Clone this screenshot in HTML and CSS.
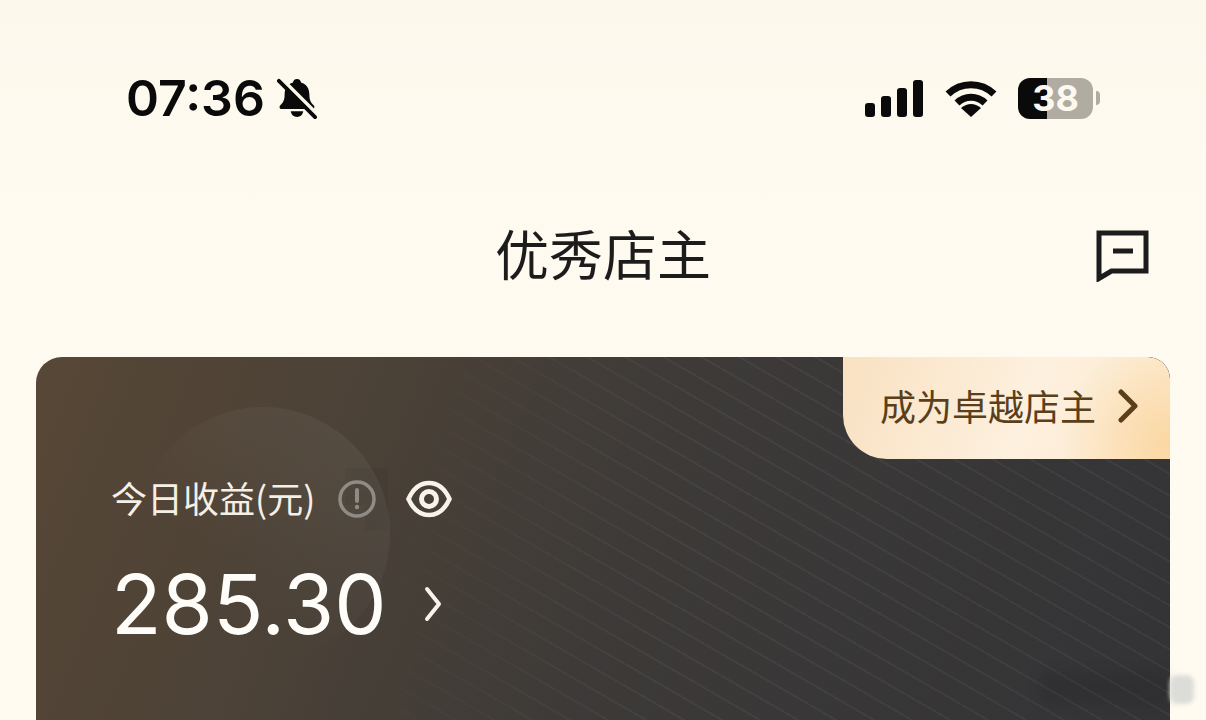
FILE: index.html
```html
<!DOCTYPE html>
<html lang="zh-CN">

<head>
    <meta charset="UTF-8">
    <meta name="viewport" content="width=device-width, initial-scale=1.0">
    <title>优秀店主</title>
    <link rel="stylesheet" href="styles.css">
</head>

<body>
    <div class="status-bar">
        <div class="status-left">
            <span class="clock">07:36</span>
            <svg class="bell-icon" viewBox="0 0 42 42">
                <path d="M21 1c2.600 0 4 1.700 4.200 3.800 6 1.600 8.800 6.600 8.800 12.700 0 5.500 1.600 8.300 4.500 11 1.300 1.300 1.100 4-1.500 4H5c-2.600 0-2.800-2.700-1.500-4 2.900-2.700 4.500-5.500 4.500-11 0-6.100 2.800-11.100 8.800-12.700C17 2.700 18.400 1 21 1z" fill="#0a0a0a"/>
                <path d="M14.500 35h13c-.4 3.600-3 6-6.500 6s-6.100-2.400-6.500-6z" fill="#0a0a0a"/>
                <path d="M4 0l38 38" stroke="#fdf8ec" stroke-width="4"/>
                <path d="M2 3l38 38" stroke="#0a0a0a" stroke-width="4" stroke-linecap="round"/>
            </svg>
        </div>
        <div class="status-right">
            <div class="signal">
                <span class="signal-bar bar-1"></span>
                <span class="signal-bar bar-2"></span>
                <span class="signal-bar bar-3"></span>
                <span class="signal-bar bar-4"></span>
            </div>
            <svg class="wifi-icon" viewBox="0 0 52 38">
                <path d="M3 15A33 33 0 0 1 49 15" fill="none" stroke="#0a0a0a" stroke-width="7"/>
                <path d="M12 24A20 20 0 0 1 40 24" fill="none" stroke="#0a0a0a" stroke-width="7"/>
                <path d="M26 38L16 29Q26 21 36 29Z" fill="#0a0a0a"/>
            </svg>
            <div class="battery">
                <div class="battery-body"><span class="battery-level">38</span></div>
                <span class="battery-nub"></span>
            </div>
        </div>
    </div>

    <div class="nav-bar">
        <h1 class="nav-title">优秀店主</h1>
        <svg class="message-icon" viewBox="0 0 54 52">
            <path d="M3 3h47v38H15.500L3 48.500z" fill="none" stroke="#1c1c1c" stroke-width="5" stroke-linejoin="miter"/>
            <path d="M17 21h20" stroke="#1c1c1c" stroke-width="5"/>
        </svg>
    </div>

    <div class="income-card">
        <div class="upgrade-tag">
            <span class="tag-text">成为卓越店主</span>
            <svg class="tag-arrow" viewBox="0 0 20 34">
                <path d="M3 3l14 14L3 31" fill="none" stroke="#5a3f1a" stroke-width="5" stroke-linecap="round" stroke-linejoin="round"/>
            </svg>
        </div>
        <div class="income-body">
            <div class="income-label">
                <span class="label-text">今日收益(元)</span>
                <svg class="info-icon" viewBox="0 0 38 38">
                    <circle cx="19" cy="19" r="17" fill="none" stroke="#8f8b85" stroke-width="3.500"/>
                    <path d="M19 10v11" stroke="#8f8b85" stroke-width="4" stroke-linecap="round"/>
                    <circle cx="19" cy="27" r="2.200" fill="#8f8b85"/>
                </svg>
                <svg class="eye-icon" viewBox="0 0 46 38">
                    <path d="M2.500 19C7 9 14 3 23 3s16 6 20.500 16C39 29 32 35 23 35S7 29 2.500 19z" fill="none" stroke="#f8f3ea" stroke-width="4.500"/>
                    <circle cx="23" cy="19" r="7.500" fill="none" stroke="#f8f3ea" stroke-width="5"/>
                </svg>
            </div>
            <div class="income-amount">
                <span class="amount-value">285.30</span>
                <svg class="amount-arrow" viewBox="0 0 18 36">
                    <path d="M3 3l12 15L3 33" fill="none" stroke="#f8f3ea" stroke-width="4" stroke-linecap="round" stroke-linejoin="round"/>
                </svg>
            </div>
        </div>
    </div>

    <!-- blurred watermark in the corner of the shot -->
    <span class="watermark-dark"></span>
    <span class="watermark-light"></span>
</body>

</html>
```

FILE: styles.css
```css
html,
body {
    height: 720px;
    overflow: hidden;
}

body {
    margin: 0;
    padding: 0;
    background: linear-gradient(to bottom, #fdf8ec 0, #fffaef 150px, #fffbf1 100%);
    font-family: "Inter", "Noto Sans CJK SC", sans-serif;
    color: #1c1c1c;
}

.status-bar {
    display: flex;
    align-items: center;
    justify-content: space-between;
    height: 196px;
    padding: 0 106px 0 126px;
    box-sizing: border-box;
}

.status-left {
    display: flex;
    align-items: center;
    gap: 12px;
}

.clock {
    font-size: 50px;
    font-weight: 600;
    line-height: 1;
    color: #0a0a0a;
}

.bell-icon {
    width: 40px;
    height: 42px;
}

.status-right {
    display: flex;
    align-items: center;
}

.signal {
    display: flex;
    align-items: flex-end;
    gap: 6px;
    height: 37px;
    margin-right: 22px;
}

.signal-bar {
    width: 10px;
    background-color: #0a0a0a;
    border-radius: 3px;
}

.bar-1 {
    height: 14px;
}

.bar-2 {
    height: 21px;
}

.bar-3 {
    height: 29px;
}

.bar-4 {
    height: 37px;
}

.wifi-icon {
    width: 52px;
    height: 38px;
    margin-right: 21px;
}

.battery {
    display: flex;
    align-items: center;
    gap: 3px;
}

.battery-body {
    display: flex;
    align-items: center;
    justify-content: center;
    width: 75px;
    height: 41px;
    border-radius: 12px;
    background: linear-gradient(to right, #0a0a0a 29px, #b0aca2 29px);
}

.battery-level {
    font-size: 36px;
    font-weight: 700;
    line-height: 1;
    color: #fdf9f0;
}

.battery-nub {
    width: 4px;
    height: 14px;
    border-radius: 0 4px 4px 0;
    background-color: #b0aca2;
}

.nav-bar {
    display: grid;
    grid-template-columns: 1fr auto 1fr;
    height: 122px;
    padding: 0 56px;
    box-sizing: border-box;
}

.nav-title {
    grid-column: 2;
    margin: 30px 0 0;
    font-family: "Noto Sans CJK SC", sans-serif;
    font-size: 54px;
    font-weight: 400;
    line-height: 1;
}

.message-icon {
    grid-column: 3;
    justify-self: end;
    margin-top: 34px;
    width: 54px;
    height: 52px;
}

.income-card {
    display: flex;
    flex-direction: column;
    position: relative;
    overflow: hidden;
    height: 363px;
    margin: 39px 36px 0;
    border-radius: 26px 22px 0 0;
    background:
        linear-gradient(rgba(0, 0, 0, 0.05), rgba(0, 0, 0, 0.05)) 309px 111px / 43px 37px no-repeat,
        linear-gradient(rgba(0, 0, 0, 0.05), rgba(0, 0, 0, 0.05)) 329px 148px / 23px 25px no-repeat,
        linear-gradient(112deg, #574736 0, #4c4237 26%, #3d3a38 52%, #333336 100%);
}

/* thin diagonal lines, fade out towards the left */
.income-card::before {
    content: "";
    position: absolute;
    top: 0;
    right: 0;
    bottom: 0;
    left: 0;
    background: repeating-linear-gradient(30deg, rgba(255, 255, 255, 0.045) 0, rgba(255, 255, 255, 0.045) 2px, rgba(255, 255, 255, 0) 2px, rgba(255, 255, 255, 0) 19px);
    -webkit-mask-image: linear-gradient(100deg, transparent 30%, #000 55%);
    mask-image: linear-gradient(100deg, transparent 30%, #000 55%);
}

/* big soft circle behind the income, only its upper right edge shows */
.income-card::after {
    content: "";
    position: absolute;
    top: 50px;
    left: 100px;
    width: 254px;
    height: 254px;
    border-radius: 50%;
    background: linear-gradient(45deg, rgba(255, 255, 255, 0) 35%, rgba(255, 255, 255, 0.05) 85%);
}

.upgrade-tag {
    display: flex;
    align-items: center;
    justify-content: space-between;
    position: relative;
    align-self: flex-end;
    box-sizing: border-box;
    width: 327px;
    height: 102px;
    padding: 0 32px 4px 37px;
    border-radius: 0 22px 0 44px;
    background:
        radial-gradient(circle at 100% 85%, #fbd7a2 0, rgba(251, 215, 162, 0) 110px),
        linear-gradient(110deg, #f9e1c1 0, #fdf0de 55%, #fbeacf 100%);
    font-family: "Noto Sans CJK SC", sans-serif;
    font-size: 36px;
    line-height: 1;
    color: #5a3f1a;
}

.tag-text {
    margin-bottom: 2px;
}

.tag-arrow {
    width: 20px;
    height: 34px;
}

.income-body {
    position: relative;
    z-index: 1;
    padding: 19px 0 0 75px;
}

.income-label {
    display: flex;
    align-items: center;
    height: 38px;
}

.label-text {
    font-family: "Noto Sans CJK SC", sans-serif;
    font-size: 36px;
    line-height: 1;
    color: #f5efe6;
}

.info-icon {
    width: 38px;
    height: 38px;
    margin: 4px 0 0 23px;
}

.eye-icon {
    width: 46px;
    height: 38px;
    margin: 4px 0 0 30px;
}

.income-amount {
    display: flex;
    align-items: center;
    height: 80px;
    margin-top: 48px;
}

.amount-value {
    font-size: 83px;
    font-weight: 400;
    line-height: 1;
    color: #fffdf9;
}

.amount-arrow {
    width: 18px;
    height: 36px;
    margin-left: 37px;
}

.watermark-dark {
    position: absolute;
    left: 1040px;
    top: 672px;
    width: 130px;
    height: 32px;
    background-color: rgba(0, 0, 0, 0.08);
    filter: blur(6px);
}

.watermark-light {
    position: absolute;
    left: 1170px;
    top: 675px;
    width: 24px;
    height: 29px;
    border-radius: 8px;
    background-color: #dcdcd8;
    filter: blur(2px);
}
```
